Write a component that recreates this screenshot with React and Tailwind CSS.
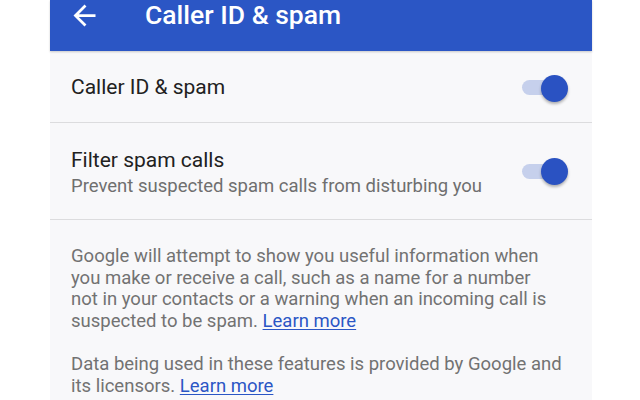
export default function App() {
    return (
        <div className="w-[640px] h-[400px] bg-white flex justify-center overflow-hidden font-['Roboto',sans-serif]">
            <div className="w-[542px] ml-[2px] flex flex-col bg-[#f8f8fa]">
                {/* App bar */}
                <header className="h-[51px] shrink-0 bg-[#2b56c5] flex items-center pb-[21px] shadow-[0_1px_2px_rgba(0,0,0,0.2)]">
                    <svg width="33" height="33" viewBox="0 0 24 24" className="ml-[18px] text-white">
                        <path d="M20 11H7.83l5.59-5.59L12 4l-8 8 8 8 1.41-1.41L7.83 13H20v-2z" fill="currentColor" />
                    </svg>
                    <h1 className="ml-[44px] text-[26.5px] text-white font-medium">Caller ID &amp; spam</h1>
                </header>

                {/* Caller ID toggle row */}
                <div className="h-[72px] flex items-center justify-between pl-[21px] pr-[24px] pt-[2px] border-b border-[#dcdcde]">
                    <span className="text-[21px] text-[#212121]">Caller ID &amp; spam</span>
                    <Toggle />
                </div>

                {/* Filter spam row */}
                <div className="h-[97px] flex items-center justify-between pl-[21px] pr-[24px] pt-[4px] border-b border-[#dcdcde]">
                    <div className="flex flex-col">
                        <span className="text-[21px] leading-[26px] text-[#212121]">Filter spam calls</span>
                        <span className="text-[18.5px] leading-[27px] text-[#6f6f6f]">Prevent suspected spam calls from disturbing you</span>
                    </div>
                    <div className="-mt-[4px]">
                        <Toggle />
                    </div>
                </div>

                {/* Info text */}
                <div className="pl-[21px] pr-[24px] pt-[26px] text-[18.5px] leading-[21.5px] text-[#727272]">
                    <p className="mr-[12px]">
                        Google will attempt to show you useful information when you make or receive a call, such as a name for a number not in your contacts or a warning when an incoming call is suspected to be spam.{" "}
                        <a className="text-[#2b56c5] underline underline-offset-2">Learn more</a>
                    </p>
                    <p className="mt-[22px]">
                        Data being used in these features is provided by Google and its licensors.{" "}
                        <a className="text-[#2b56c5] underline underline-offset-2">Learn more</a>
                    </p>
                </div>
            </div>
        </div>
    );
}

function Toggle() {
    return (
        <div className="relative w-[46px] h-[28px] flex items-center">
            <div className="w-[40px] h-[15px] rounded-full bg-[#c6d0ec]" />
            <div className="absolute right-0 top-[1px] w-[27px] h-[27px] rounded-full bg-[#2a52c2] shadow-[0_2px_3px_rgba(0,0,0,0.3)]" />
        </div>
    );
}
